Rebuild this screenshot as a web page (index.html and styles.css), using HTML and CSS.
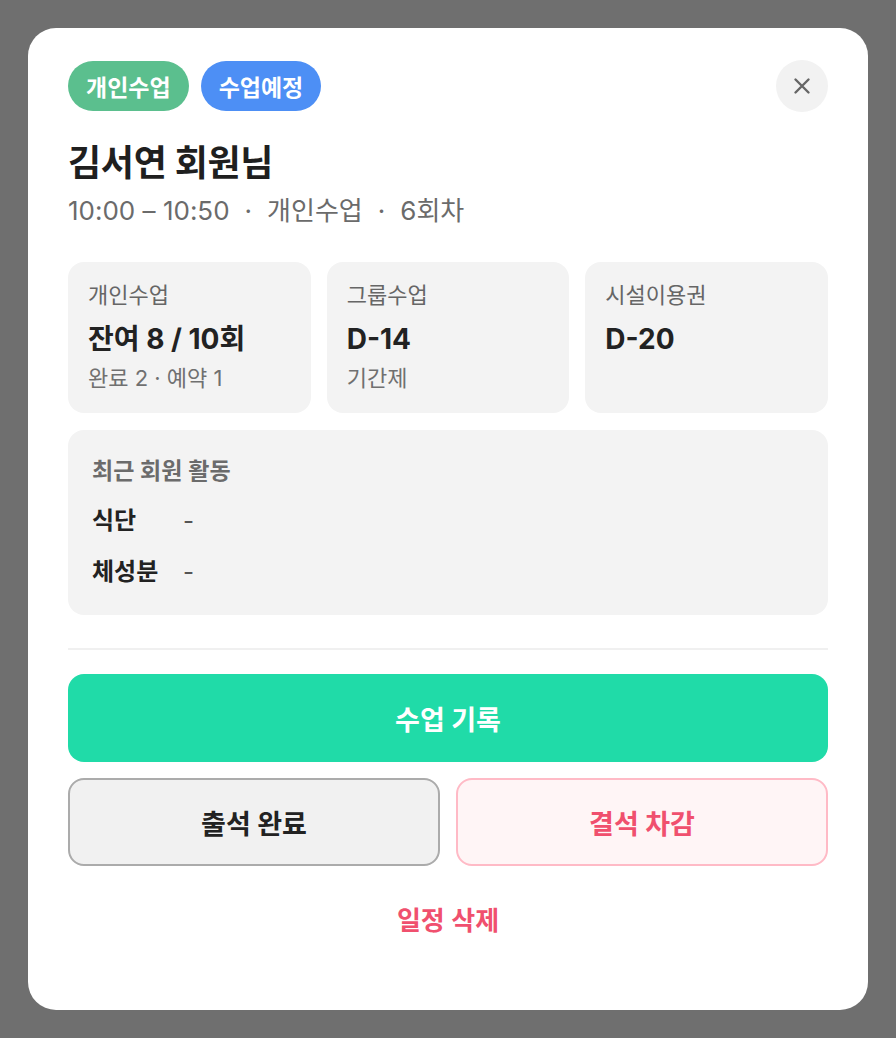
FILE: index.html
```html
<!DOCTYPE html>
<html lang="ko">
<head>
<meta charset="utf-8">
<title>수업 상세</title>
<link rel="stylesheet" href="styles.css">
</head>
<body>
<div class="overlay">
  <div class="modal">
    <div class="header">
      <div class="badges">
        <span class="badge badge-green">개인수업</span>
        <span class="badge badge-blue">수업예정</span>
      </div>
      <button class="close" aria-label="닫기">
        <svg width="18" height="18" viewBox="0 0 18 18"><path d="M2.5 2.5 L15.5 15.5 M15.5 2.5 L2.5 15.5" stroke="#666" stroke-width="2.4" stroke-linecap="round" fill="none"/></svg>
      </button>
    </div>
    <h1 class="title">김서연 회원님</h1>
    <div class="subtitle"><span>10:00 – 10:50</span><span class="sep">·</span><span>개인수업</span><span class="sep">·</span><span>6회차</span></div>

    <div class="cards">
      <div class="card">
        <div class="card-label">개인수업</div>
        <div class="card-value">잔여 8 / 10회</div>
        <div class="card-sub">완료 2 · 예약 1</div>
      </div>
      <div class="card">
        <div class="card-label">그룹수업</div>
        <div class="card-value">D-14</div>
        <div class="card-sub">기간제</div>
      </div>
      <div class="card">
        <div class="card-label">시설이용권</div>
        <div class="card-value">D-20</div>
      </div>
    </div>

    <div class="activity">
      <div class="activity-label">최근 회원 활동</div>
      <div class="activity-row"><span class="act-key">식단</span><span class="act-val">-</span></div>
      <div class="activity-row"><span class="act-key">체성분</span><span class="act-val">-</span></div>
    </div>

    <div class="divider"></div>

    <button class="btn btn-primary">수업 기록</button>
    <div class="btn-row">
      <button class="btn btn-gray">출석 완료</button>
      <button class="btn btn-pink">결석 차감</button>
    </div>
    <button class="btn-link">일정 삭제</button>
  </div>
</div>
</body>
</html>
```

FILE: styles.css
```css
* { box-sizing: border-box; }
html, body {
  margin: 0;
  padding: 0;
  background: #6f6f6f;
  font-family: Inter, "Noto Sans CJK KR", sans-serif;
}
.overlay {
  padding: 28px;
  height: 1038px;
}
.modal {
  background: #fff;
  border-radius: 28px;
  padding: 32px 40px 0;
  height: 982px;
  display: flex;
  flex-direction: column;
}
.header {
  display: flex;
  justify-content: space-between;
  align-items: center;
}
.badges { display: flex; gap: 12px; }
.badge {
  height: 50px;
  padding: 0 18px;
  border-radius: 25px;
  display: inline-flex;
  align-items: center;
  color: #fff;
  font-size: 23px;
  font-weight: 700;
}
.badge-green { background: #5bbf8e; }
.badge-blue { background: #4d8ff5; }
.close {
  width: 52px;
  height: 52px;
  border-radius: 50%;
  border: none;
  background: #f2f2f2;
  display: flex;
  align-items: center;
  justify-content: center;
  padding: 0;
}
.title {
  margin: 29px 0 0;
  font-size: 36px;
  line-height: 44px;
  font-weight: 700;
  color: #1f1f1f;
  letter-spacing: -0.3px;
}
.subtitle {
  margin-top: 10px;
  font-size: 26px;
  line-height: 32px;
  color: #6b6b6b;
}
.subtitle .sep { margin: 0 15px; }
.cards {
  margin-top: 35px;
  display: grid;
  grid-template-columns: repeat(3, 1fr);
  gap: 16px;
}
.card {
  background: #f3f3f3;
  border-radius: 16px;
  height: 151px;
  padding: 18px 20px;
}
.card-label {
  font-size: 22px;
  line-height: 30px;
  color: #666;
}
.card-value {
  margin-top: 11px;
  font-size: 28px;
  line-height: 36px;
  font-weight: 700;
  color: #222;
}
.card-sub {
  margin-top: 6px;
  font-size: 22px;
  line-height: 30px;
  color: #707070;
}
.activity {
  margin-top: 17px;
  background: #f3f3f3;
  border-radius: 16px;
  height: 185px;
  padding: 26px 24px;
}
.activity-label {
  font-size: 23px;
  line-height: 30px;
  font-weight: 600;
  color: #6b6b6b;
}
.activity-row {
  margin-top: 19px;
  display: flex;
  font-size: 24px;
  line-height: 32px;
  font-weight: 700;
  color: #222;
}
.act-key { width: 91px; }
.act-val { font-weight: 400; color: #555; }
.divider {
  margin-top: 33px;
  height: 2px;
  background: #f0f0f0;
}
.btn {
  border-radius: 16px;
  height: 88px;
  font-family: inherit;
  font-size: 27px;
  font-weight: 700;
  display: flex;
  align-items: center;
  justify-content: center;
  width: 100%;
}
.btn-primary {
  margin-top: 24px;
  background: #20dba8;
  border: none;
  color: #fff;
}
.btn-row {
  margin-top: 16px;
  display: grid;
  grid-template-columns: 1fr 1fr;
  gap: 16px;
}
.btn-gray {
  background: #f1f1f1;
  border: 2px solid #ababab;
  color: #222;
}
.btn-pink {
  background: #fff5f6;
  border: 2px solid #ffbac6;
  color: #f0506e;
}
.btn-link {
  margin-top: 31px;
  align-self: center;
  background: none;
  border: none;
  font-family: inherit;
  font-size: 26px;
  font-weight: 600;
  color: #f0506e;
  padding: 8px 16px;
  line-height: 32px;
}
```
